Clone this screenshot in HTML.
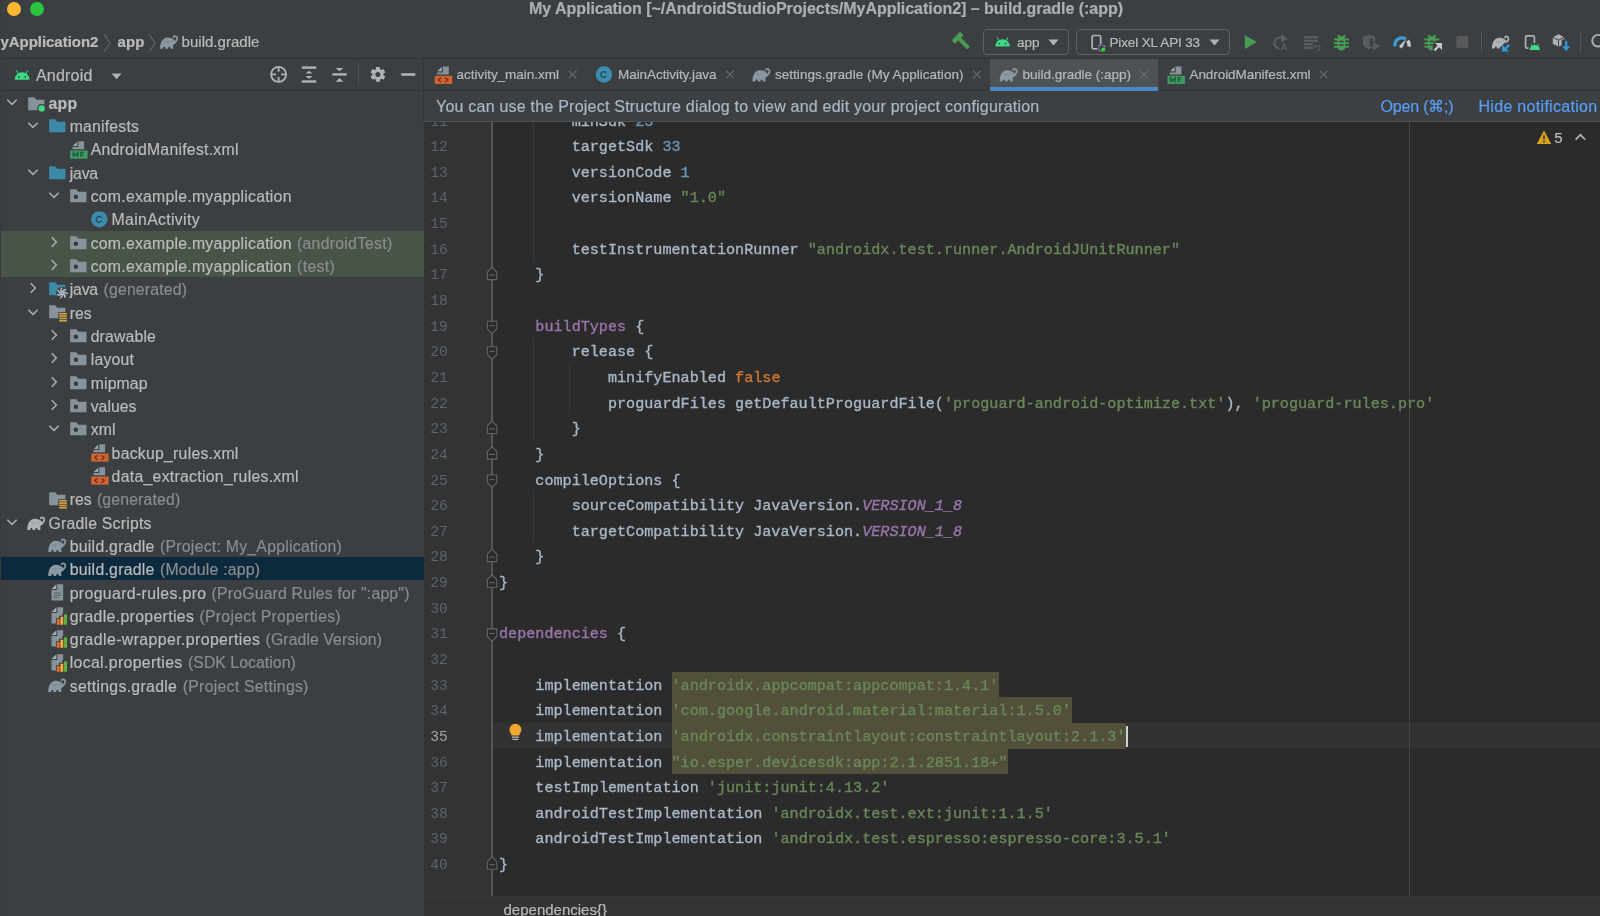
<!DOCTYPE html>
<html><head><meta charset="utf-8"><title>My Application - build.gradle (:app)</title>
<style>

*{margin:0;padding:0;box-sizing:border-box}
html,body{width:1600px;height:916px;overflow:hidden;background:#3c3f41;font-family:"Liberation Sans",sans-serif;}
.t{position:absolute;-webkit-text-stroke:0.2px;white-space:pre;line-height:20px;height:20px;}
.a{position:absolute;}
.m{font-family:"Liberation Mono",monospace;-webkit-text-stroke:0.35px;}
.n{-webkit-text-stroke:0;}
#ed{position:absolute;left:424px;top:122px;width:1176px;height:774px;background:#2b2b2b;overflow:hidden;}
#ed2{position:absolute;left:424px;top:122px;width:1176px;height:774px;overflow:hidden;}
#ed2 .t{margin-left:-424px;margin-top:-122px;}
svg{position:absolute;overflow:visible}
#tx{position:absolute;left:0;top:0;width:1600px;height:916px;will-change:transform;}

</style></head><body>
<div class="a" style="left:0px;top:58px;width:1600px;height:1px;background:#323436;"></div>
<div class="a" style="left:0px;top:90px;width:1600px;height:1px;background:#323436;"></div>
<div class="a" style="left:423.4px;top:59px;width:1px;height:63px;background:#323537;"></div>
<div class="a" style="left:7px;top:2px;width:14px;height:14px;border-radius:7px;background:#fbb930"></div>
<div class="a" style="left:30px;top:2px;width:14px;height:14px;border-radius:7px;background:#2ac43e"></div>
<div class="a" style="left:0px;top:230.71px;width:424px;height:46.64px;background:#495449;"></div>
<div class="a" style="left:0px;top:557.24px;width:424px;height:22.9px;background:#0d293e;"></div>
<div class="a" style="left:990px;top:59px;width:168px;height:31px;background:#4e5254;"></div>
<div class="a" style="left:990px;top:87px;width:168px;height:4px;background:#4a88c7;"></div>
<div class="a" style="left:424.4px;top:91px;width:1176px;height:30px;background:#3d4042;"></div>
<div class="a" style="left:424.4px;top:121px;width:1176px;height:2px;background:#4f5152;"></div>
<div class="a" style="left:983px;top:29px;width:86px;height:26px;border:1px solid #5e6163;border-radius:4px"></div>
<div class="a" style="left:1076px;top:29px;width:154px;height:26px;border:1px solid #5e6163;border-radius:4px"></div>
<div class="a" style="left:1481px;top:31px;width:1px;height:22px;background:#555555;"></div>
<div class="a" style="left:1580px;top:31px;width:1px;height:22px;background:#555555;"></div>
<div class="a" style="left:358.1px;top:63px;width:1px;height:23px;background:#515151;"></div>
<div class="a" style="left:0px;top:0px;width:1px;height:916px;background:#383a3c;"></div>
<div class="a" style="left:424px;top:896.3px;width:1176px;height:20px;background:#313335;"></div>
<div class="a" style="left:424px;top:896.3px;width:1176px;height:1px;background:#37393b;"></div>
<div id="ed">
<div class="a" style="left:0px;top:0px;width:68px;height:774px;background:#313335;"></div>
<div class="a" style="left:67.39999999999998px;top:0px;width:1.4px;height:774px;background:#555555;"></div>
<div class="a" style="left:69px;top:600.9px;width:1107px;height:25px;background:#323232;"></div>
<div class="a" style="left:985px;top:0px;width:1px;height:774px;background:#454545;"></div>
<div class="a" style="left:248.01999999999998px;top:549.62px;width:326.88px;height:25.94px;background:#52503a;"></div>
<div class="a" style="left:248.01999999999998px;top:575.26px;width:399.52px;height:25.94px;background:#52503a;"></div>
<div class="a" style="left:248.01999999999998px;top:600.9px;width:454.0px;height:25.94px;background:#52503a;"></div>
<div class="a" style="left:248.01999999999998px;top:626.54px;width:335.96px;height:25.94px;background:#52503a;"></div>
<div class="a" style="left:702.02px;top:603.72px;width:2px;height:21px;background:#d0d0d0;"></div>
<div class="a" style="left:108.82000000000005px;top:-40.099999999999994px;width:1px;height:179.48000000000002px;background:#393939;"></div>
<div class="a" style="left:108.82000000000005px;top:216.3px;width:1px;height:102.56px;background:#393939;"></div>
<div class="a" style="left:145.14px;top:241.94px;width:1px;height:51.28px;background:#393939;"></div>
<div class="a" style="left:108.82000000000005px;top:370.14000000000004px;width:1px;height:51.28px;background:#393939;"></div>
<svg class="a" style="left:-424px;top:-122px" width="1600" height="916" viewBox="0 0 1600 916"><path d="M487.40000000000003,321.18 H496.8 V328.78000000000003 L492.1,333.58 L487.40000000000003,328.78000000000003 Z" fill="#2b2b2b" stroke="#626568" stroke-width="1.1"/><path d="M489.40000000000003,325.78000000000003 H494.8" stroke="#626568" stroke-width="1.1"/>
<path d="M487.40000000000003,346.82 H496.8 V354.42 L492.1,359.21999999999997 L487.40000000000003,354.42 Z" fill="#2b2b2b" stroke="#626568" stroke-width="1.1"/><path d="M489.40000000000003,351.42 H494.8" stroke="#626568" stroke-width="1.1"/>
<path d="M487.40000000000003,475.02 H496.8 V482.62 L492.1,487.41999999999996 L487.40000000000003,482.62 Z" fill="#2b2b2b" stroke="#626568" stroke-width="1.1"/><path d="M489.40000000000003,479.62 H494.8" stroke="#626568" stroke-width="1.1"/>
<path d="M487.40000000000003,628.8600000000001 H496.8 V636.4600000000002 L492.1,641.2600000000001 L487.40000000000003,636.4600000000002 Z" fill="#2b2b2b" stroke="#626568" stroke-width="1.1"/><path d="M489.40000000000003,633.4600000000002 H494.8" stroke="#626568" stroke-width="1.1"/>
<path d="M492.1,267.2 L496.8,272.0 V279.59999999999997 H487.40000000000003 V272.0 Z" fill="#2b2b2b" stroke="#626568" stroke-width="1.1"/><path d="M489.40000000000003,275.0 H494.8" stroke="#626568" stroke-width="1.1"/>
<path d="M492.1,421.04 L496.8,425.84000000000003 V433.44 H487.40000000000003 V425.84000000000003 Z" fill="#2b2b2b" stroke="#626568" stroke-width="1.1"/><path d="M489.40000000000003,428.84000000000003 H494.8" stroke="#626568" stroke-width="1.1"/>
<path d="M492.1,446.68 L496.8,451.48 V459.08 H487.40000000000003 V451.48 Z" fill="#2b2b2b" stroke="#626568" stroke-width="1.1"/><path d="M489.40000000000003,454.48 H494.8" stroke="#626568" stroke-width="1.1"/>
<path d="M492.1,549.24 L496.8,554.04 V561.64 H487.40000000000003 V554.04 Z" fill="#2b2b2b" stroke="#626568" stroke-width="1.1"/><path d="M489.40000000000003,557.04 H494.8" stroke="#626568" stroke-width="1.1"/>
<path d="M492.1,574.88 L496.8,579.68 V587.28 H487.40000000000003 V579.68 Z" fill="#2b2b2b" stroke="#626568" stroke-width="1.1"/><path d="M489.40000000000003,582.68 H494.8" stroke="#626568" stroke-width="1.1"/>
<path d="M492.1,856.9200000000001 L496.8,861.72 V869.32 H487.40000000000003 V861.72 Z" fill="#2b2b2b" stroke="#626568" stroke-width="1.1"/><path d="M489.40000000000003,864.72 H494.8" stroke="#626568" stroke-width="1.1"/>
<path d="M509.4,729.8 A6,6 0 1 1 521.4,729.8 C521.4,732.4 519.3,733.4 519.3,735.5999999999999 H511.5 C511.5,733.4 509.4,732.4 509.4,729.8 Z" fill="#f0a732"/>
<path d="M511.79999999999995,737.0999999999999 H519.0 M512.4,739.4 H518.4" stroke="#b4b6b8" stroke-width="1.3"/></svg>
</div>
<svg class="a" style="left:26.60px;top:94.60px" width="18.65" height="18.65" viewBox="0 0 16 16"><path d="M1,2 H6.3 L7.9,4 H15 V13 H1 Z" fill="#87939a"/><circle cx="12.6" cy="11.5" r="3.7" fill="#3c3f41"/><circle cx="12.6" cy="11.5" r="2.7" fill="#3ddc84"/></svg>
<svg class="a" style="left:4.200000000000003px;top:93.8px" width="16" height="16" viewBox="-8 -8 16 16"><path d="M-4.7,-2.3 L0,2.4 L4.7,-2.3" fill="none" stroke="#adadad" stroke-width="1.5"/></svg>
<svg class="a" style="left:47.80px;top:117.12px" width="18.65" height="18.65" viewBox="0 0 16 16"><path d="M1,2 H6.3 L7.9,4 H15 V13 H1 Z" fill="#3d8aa8"/></svg>
<svg class="a" style="left:25.400000000000006px;top:117.11999999999999px" width="16" height="16" viewBox="-8 -8 16 16"><path d="M-4.7,-2.3 L0,2.4 L4.7,-2.3" fill="none" stroke="#adadad" stroke-width="1.5"/></svg>
<svg class="a" style="left:68.80px;top:139.74px" width="18.65" height="18.65" viewBox="0 0 16 16"><path d="M7.1,1.3 L3.2,5.2 H7.1 Z" fill="#9ca7ae"/><path d="M8,1 H13 V8 H3 V6.1 H8 Z" fill="#87939a"/><rect x="1" y="9" width="15" height="7" fill="#3d9b63"/><path d="M3.6,14.6 V10.6 L5.6,13.4 L7.6,10.6 V14.6 M10.2,14.6 V10.6 H13 M10.2,12.5 H12.5" fill="none" stroke="#1e5a37" stroke-width="1.05"/></svg>
<svg class="a" style="left:47.80px;top:163.76px" width="18.65" height="18.65" viewBox="0 0 16 16"><path d="M1,2 H6.3 L7.9,4 H15 V13 H1 Z" fill="#3d8aa8"/></svg>
<svg class="a" style="left:25.400000000000006px;top:163.76000000000002px" width="16" height="16" viewBox="-8 -8 16 16"><path d="M-4.7,-2.3 L0,2.4 L4.7,-2.3" fill="none" stroke="#adadad" stroke-width="1.5"/></svg>
<svg class="a" style="left:68.80px;top:187.08px" width="18.65" height="18.65" viewBox="0 0 16 16"><path d="M1,2 H6.3 L7.9,4 H15 V13 H1 Z" fill="#87939a"/><circle cx="5.9" cy="8.4" r="1.9" fill="#34383b"/></svg>
<svg class="a" style="left:46.400000000000006px;top:187.08px" width="16" height="16" viewBox="-8 -8 16 16"><path d="M-4.7,-2.3 L0,2.4 L4.7,-2.3" fill="none" stroke="#adadad" stroke-width="1.5"/></svg>
<svg class="a" style="left:89.70px;top:209.70px" width="18.65" height="18.65" viewBox="0 0 16 16"><circle cx="8" cy="8" r="7" fill="#3c8dab"/><path d="M9.95,9.4 A2.5,2.5 0 1 1 9.95,6.6" fill="none" stroke="#27485a" stroke-width="1.15"/></svg>
<svg class="a" style="left:68.80px;top:233.72px" width="18.65" height="18.65" viewBox="0 0 16 16"><path d="M1,2 H6.3 L7.9,4 H15 V13 H1 Z" fill="#87939a"/><circle cx="5.9" cy="8.4" r="1.9" fill="#34383b"/></svg>
<svg class="a" style="left:45.60000000000001px;top:233.82000000000002px" width="16" height="16" viewBox="-8 -8 16 16"><path d="M-2.3,-4.7 L2.4,0 L-2.3,4.7" fill="none" stroke="#adadad" stroke-width="1.5"/></svg>
<svg class="a" style="left:68.80px;top:257.04px" width="18.65" height="18.65" viewBox="0 0 16 16"><path d="M1,2 H6.3 L7.9,4 H15 V13 H1 Z" fill="#87939a"/><circle cx="5.9" cy="8.4" r="1.9" fill="#34383b"/></svg>
<svg class="a" style="left:45.60000000000001px;top:257.14px" width="16" height="16" viewBox="-8 -8 16 16"><path d="M-2.3,-4.7 L2.4,0 L-2.3,4.7" fill="none" stroke="#adadad" stroke-width="1.5"/></svg>
<svg class="a" style="left:47.80px;top:280.06px" width="18.65" height="18.65" viewBox="0 0 16 16"><path d="M1,2 H6.3 L7.9,4 H15 V13 H1 Z" fill="#3d8aa8"/><circle cx="12.2" cy="11.2" r="5.3" fill="#3c3f41"/><path d="M13.30,11.20 Q14.54,12.48 14.52,14.82 M12.89,12.06 Q12.66,13.83 10.82,15.27 M11.96,12.27 Q10.43,13.20 8.16,12.66 M11.21,11.68 Q9.54,11.06 8.54,8.95 M11.21,10.72 Q10.65,9.03 11.68,6.93 M11.96,10.13 Q12.93,8.63 15.21,8.13 M12.89,10.34 Q14.66,10.17 16.48,11.64" fill="none" stroke="#b5c3cd" stroke-width="1.25" stroke-linecap="round"/></svg>
<svg class="a" style="left:24.60000000000001px;top:280.46px" width="16" height="16" viewBox="-8 -8 16 16"><path d="M-2.3,-4.7 L2.4,0 L-2.3,4.7" fill="none" stroke="#adadad" stroke-width="1.5"/></svg>
<svg class="a" style="left:47.80px;top:303.08px" width="18.65" height="18.65" viewBox="0 0 16 16"><path d="M1,2 H6.3 L7.9,4 H15 V13 H1 Z" fill="#87939a"/><rect x="8.9" y="7.9" width="7.6" height="8.9" fill="#3c3f41"/><rect x="9.6" y="8.6" width="6.6" height="1.35" fill="#d9a343"/><rect x="9.6" y="10.6" width="6.6" height="1.35" fill="#d9a343"/><rect x="9.6" y="12.6" width="6.6" height="1.35" fill="#d9a343"/><rect x="9.6" y="14.6" width="6.6" height="1.35" fill="#d9a343"/></svg>
<svg class="a" style="left:25.400000000000006px;top:303.68px" width="16" height="16" viewBox="-8 -8 16 16"><path d="M-4.7,-2.3 L0,2.4 L4.7,-2.3" fill="none" stroke="#adadad" stroke-width="1.5"/></svg>
<svg class="a" style="left:68.80px;top:327.00px" width="18.65" height="18.65" viewBox="0 0 16 16"><path d="M1,2 H6.3 L7.9,4 H15 V13 H1 Z" fill="#87939a"/><circle cx="5.9" cy="8.4" r="1.9" fill="#34383b"/></svg>
<svg class="a" style="left:45.60000000000001px;top:327.09999999999997px" width="16" height="16" viewBox="-8 -8 16 16"><path d="M-2.3,-4.7 L2.4,0 L-2.3,4.7" fill="none" stroke="#adadad" stroke-width="1.5"/></svg>
<svg class="a" style="left:68.80px;top:350.32px" width="18.65" height="18.65" viewBox="0 0 16 16"><path d="M1,2 H6.3 L7.9,4 H15 V13 H1 Z" fill="#87939a"/><circle cx="5.9" cy="8.4" r="1.9" fill="#34383b"/></svg>
<svg class="a" style="left:45.60000000000001px;top:350.41999999999996px" width="16" height="16" viewBox="-8 -8 16 16"><path d="M-2.3,-4.7 L2.4,0 L-2.3,4.7" fill="none" stroke="#adadad" stroke-width="1.5"/></svg>
<svg class="a" style="left:68.80px;top:373.64px" width="18.65" height="18.65" viewBox="0 0 16 16"><path d="M1,2 H6.3 L7.9,4 H15 V13 H1 Z" fill="#87939a"/><circle cx="5.9" cy="8.4" r="1.9" fill="#34383b"/></svg>
<svg class="a" style="left:45.60000000000001px;top:373.74px" width="16" height="16" viewBox="-8 -8 16 16"><path d="M-2.3,-4.7 L2.4,0 L-2.3,4.7" fill="none" stroke="#adadad" stroke-width="1.5"/></svg>
<svg class="a" style="left:68.80px;top:396.96px" width="18.65" height="18.65" viewBox="0 0 16 16"><path d="M1,2 H6.3 L7.9,4 H15 V13 H1 Z" fill="#87939a"/><circle cx="5.9" cy="8.4" r="1.9" fill="#34383b"/></svg>
<svg class="a" style="left:45.60000000000001px;top:397.06px" width="16" height="16" viewBox="-8 -8 16 16"><path d="M-2.3,-4.7 L2.4,0 L-2.3,4.7" fill="none" stroke="#adadad" stroke-width="1.5"/></svg>
<svg class="a" style="left:68.80px;top:420.28px" width="18.65" height="18.65" viewBox="0 0 16 16"><path d="M1,2 H6.3 L7.9,4 H15 V13 H1 Z" fill="#87939a"/><circle cx="5.9" cy="8.4" r="1.9" fill="#34383b"/></svg>
<svg class="a" style="left:46.400000000000006px;top:420.28000000000003px" width="16" height="16" viewBox="-8 -8 16 16"><path d="M-4.7,-2.3 L0,2.4 L4.7,-2.3" fill="none" stroke="#adadad" stroke-width="1.5"/></svg>
<svg class="a" style="left:89.70px;top:442.90px" width="18.65" height="18.65" viewBox="0 0 16 16"><path d="M7.1,1.3 L3.2,5.2 H7.1 Z" fill="#9ca7ae"/><path d="M8,1 H13 V8 H3 V6.1 H8 Z" fill="#87939a"/><rect x="1" y="9" width="15" height="7" fill="#cd6330"/><path d="M6.4,10.6 L4.1,12.5 L6.4,14.4 M9.9,10.6 L12.2,12.5 L9.9,14.4" fill="none" stroke="#632c12" stroke-width="0.95"/></svg>
<svg class="a" style="left:89.70px;top:466.22px" width="18.65" height="18.65" viewBox="0 0 16 16"><path d="M7.1,1.3 L3.2,5.2 H7.1 Z" fill="#9ca7ae"/><path d="M8,1 H13 V8 H3 V6.1 H8 Z" fill="#87939a"/><rect x="1" y="9" width="15" height="7" fill="#cd6330"/><path d="M6.4,10.6 L4.1,12.5 L6.4,14.4 M9.9,10.6 L12.2,12.5 L9.9,14.4" fill="none" stroke="#632c12" stroke-width="0.95"/></svg>
<svg class="a" style="left:47.80px;top:489.64px" width="18.65" height="18.65" viewBox="0 0 16 16"><path d="M1,2 H6.3 L7.9,4 H15 V13 H1 Z" fill="#87939a"/><rect x="8.9" y="7.9" width="7.6" height="8.9" fill="#3c3f41"/><rect x="9.6" y="8.6" width="6.6" height="1.35" fill="#d9a343"/><rect x="9.6" y="10.6" width="6.6" height="1.35" fill="#d9a343"/><rect x="9.6" y="12.6" width="6.6" height="1.35" fill="#d9a343"/><rect x="9.6" y="14.6" width="6.6" height="1.35" fill="#d9a343"/></svg>
<svg class="a" style="left:26.60px;top:513.86px" width="18.65" height="18.65" viewBox="0 0 16 16"><path d="M0.2,13.65 C0.2,10.5 0.9,8.3 1.7,7.1 C2.7,5.4 4.4,4.05 6.9,4.05 C9.2,4.05 10.9,4.9 12.0,5.9 L13.6,7.2 L13.1,9.3 C12.0,10 11.35,10.4 11.35,10.9 L11.57,13.65 L9.33,13.65 C9.2,12.4 8.6,12.05 8.09,12.05 C7.6,12.05 7.1,12.4 7.08,13.65 L4.83,13.65 C4.8,12.4 4.2,12.05 3.7,12.05 C3.2,12.05 2.7,12.4 2.69,13.65 Z" fill="#afb1b3"/><path d="M12.3,8.7 C13.5,8.1 14.4,7.1 14.75,5.5 C15.1,4.1 14.4,3.0 13.1,2.9 C12.3,2.85 11.8,3.25 11.85,3.8" fill="none" stroke="#afb1b3" stroke-width="1.55" stroke-linecap="round"/><path d="M3.7,7.1 C4.3,8.3 6.6,8.5 7.5,7.1" fill="none" stroke="#84878a" stroke-width="0.6"/><circle cx="10.45" cy="7.1" r="0.5" fill="#84878a"/></svg>
<svg class="a" style="left:4.200000000000003px;top:513.56px" width="16" height="16" viewBox="-8 -8 16 16"><path d="M-4.7,-2.3 L0,2.4 L4.7,-2.3" fill="none" stroke="#adadad" stroke-width="1.5"/></svg>
<svg class="a" style="left:47.80px;top:536.18px" width="18.65" height="18.65" viewBox="0 0 16 16"><path d="M0.2,13.65 C0.2,10.5 0.9,8.3 1.7,7.1 C2.7,5.4 4.4,4.05 6.9,4.05 C9.2,4.05 10.9,4.9 12.0,5.9 L13.6,7.2 L13.1,9.3 C12.0,10 11.35,10.4 11.35,10.9 L11.57,13.65 L9.33,13.65 C9.2,12.4 8.6,12.05 8.09,12.05 C7.6,12.05 7.1,12.4 7.08,13.65 L4.83,13.65 C4.8,12.4 4.2,12.05 3.7,12.05 C3.2,12.05 2.7,12.4 2.69,13.65 Z" fill="#8a98a2"/><path d="M12.3,8.7 C13.5,8.1 14.4,7.1 14.75,5.5 C15.1,4.1 14.4,3.0 13.1,2.9 C12.3,2.85 11.8,3.25 11.85,3.8" fill="none" stroke="#8a98a2" stroke-width="1.55" stroke-linecap="round"/><path d="M3.7,7.1 C4.3,8.3 6.6,8.5 7.5,7.1" fill="none" stroke="#66737c" stroke-width="0.6"/><circle cx="10.45" cy="7.1" r="0.5" fill="#66737c"/></svg>
<svg class="a" style="left:47.80px;top:559.50px" width="18.65" height="18.65" viewBox="0 0 16 16"><path d="M0.2,13.65 C0.2,10.5 0.9,8.3 1.7,7.1 C2.7,5.4 4.4,4.05 6.9,4.05 C9.2,4.05 10.9,4.9 12.0,5.9 L13.6,7.2 L13.1,9.3 C12.0,10 11.35,10.4 11.35,10.9 L11.57,13.65 L9.33,13.65 C9.2,12.4 8.6,12.05 8.09,12.05 C7.6,12.05 7.1,12.4 7.08,13.65 L4.83,13.65 C4.8,12.4 4.2,12.05 3.7,12.05 C3.2,12.05 2.7,12.4 2.69,13.65 Z" fill="#8a98a2"/><path d="M12.3,8.7 C13.5,8.1 14.4,7.1 14.75,5.5 C15.1,4.1 14.4,3.0 13.1,2.9 C12.3,2.85 11.8,3.25 11.85,3.8" fill="none" stroke="#8a98a2" stroke-width="1.55" stroke-linecap="round"/><path d="M3.7,7.1 C4.3,8.3 6.6,8.5 7.5,7.1" fill="none" stroke="#66737c" stroke-width="0.6"/><circle cx="10.45" cy="7.1" r="0.5" fill="#66737c"/></svg>
<svg class="a" style="left:47.80px;top:582.82px" width="18.65" height="18.65" viewBox="0 0 16 16"><path d="M7.2,1 L3,5.2 H7.2 Z" fill="#a3adb3"/><path d="M8,1 H13 V15 H3 V6 H8 Z" fill="#87939a"/><path d="M5,8.5 H11 M5,10.5 H11 M5,12.5 H9" stroke="#5a6369" stroke-width="0.9"/></svg>
<svg class="a" style="left:47.80px;top:606.14px" width="18.65" height="18.65" viewBox="0 0 16 16"><path d="M7.2,1 L3,5.2 H7.2 Z" fill="#a3adb3"/><path d="M8,1 H13 V15 H3 V6 H8 Z" fill="#87939a"/><path d="M6.9,16.6 V10.5 H9.5 V8.3 H12.2 V6.3 H16.8 V16.6 Z" fill="#3c3f41"/><rect x="7.6" y="11.3" width="2.4" height="4.8" fill="#f26c21"/><rect x="10.7" y="9.2" width="2.4" height="6.9" fill="#f4b43e"/><rect x="13.8" y="7.2" width="2.5" height="8.9" fill="#62b543"/></svg>
<svg class="a" style="left:47.80px;top:629.46px" width="18.65" height="18.65" viewBox="0 0 16 16"><path d="M7.2,1 L3,5.2 H7.2 Z" fill="#a3adb3"/><path d="M8,1 H13 V15 H3 V6 H8 Z" fill="#87939a"/><path d="M6.9,16.6 V10.5 H9.5 V8.3 H12.2 V6.3 H16.8 V16.6 Z" fill="#3c3f41"/><rect x="7.6" y="11.3" width="2.4" height="4.8" fill="#f26c21"/><rect x="10.7" y="9.2" width="2.4" height="6.9" fill="#f4b43e"/><rect x="13.8" y="7.2" width="2.5" height="8.9" fill="#62b543"/></svg>
<svg class="a" style="left:47.80px;top:652.78px" width="18.65" height="18.65" viewBox="0 0 16 16"><path d="M7.2,1 L3,5.2 H7.2 Z" fill="#a3adb3"/><path d="M8,1 H13 V15 H3 V6 H8 Z" fill="#87939a"/><path d="M6.9,16.6 V10.5 H9.5 V8.3 H12.2 V6.3 H16.8 V16.6 Z" fill="#3c3f41"/><rect x="7.6" y="11.3" width="2.4" height="4.8" fill="#f26c21"/><rect x="10.7" y="9.2" width="2.4" height="6.9" fill="#f4b43e"/><rect x="13.8" y="7.2" width="2.5" height="8.9" fill="#62b543"/></svg>
<svg class="a" style="left:47.80px;top:676.10px" width="18.65" height="18.65" viewBox="0 0 16 16"><path d="M0.2,13.65 C0.2,10.5 0.9,8.3 1.7,7.1 C2.7,5.4 4.4,4.05 6.9,4.05 C9.2,4.05 10.9,4.9 12.0,5.9 L13.6,7.2 L13.1,9.3 C12.0,10 11.35,10.4 11.35,10.9 L11.57,13.65 L9.33,13.65 C9.2,12.4 8.6,12.05 8.09,12.05 C7.6,12.05 7.1,12.4 7.08,13.65 L4.83,13.65 C4.8,12.4 4.2,12.05 3.7,12.05 C3.2,12.05 2.7,12.4 2.69,13.65 Z" fill="#8a98a2"/><path d="M12.3,8.7 C13.5,8.1 14.4,7.1 14.75,5.5 C15.1,4.1 14.4,3.0 13.1,2.9 C12.3,2.85 11.8,3.25 11.85,3.8" fill="none" stroke="#8a98a2" stroke-width="1.55" stroke-linecap="round"/><path d="M3.7,7.1 C4.3,8.3 6.6,8.5 7.5,7.1" fill="none" stroke="#66737c" stroke-width="0.6"/><circle cx="10.45" cy="7.1" r="0.5" fill="#66737c"/></svg>
<svg class="a" style="left:0;top:0" width="1600" height="916" viewBox="0 0 1600 916"><path d="M104.3,34.5 L109.89999999999999,43 L104.3,51.5" fill="none" stroke="#5f6668" stroke-width="1.2"/>
<path d="M149.3,34.5 L154.9,43 L149.3,51.5" fill="none" stroke="#5f6668" stroke-width="1.2"/>
<g transform="translate(159.80,32.80) scale(1.1655)"><path d="M0.2,13.65 C0.2,10.5 0.9,8.3 1.7,7.1 C2.7,5.4 4.4,4.05 6.9,4.05 C9.2,4.05 10.9,4.9 12.0,5.9 L13.6,7.2 L13.1,9.3 C12.0,10 11.35,10.4 11.35,10.9 L11.57,13.65 L9.33,13.65 C9.2,12.4 8.6,12.05 8.09,12.05 C7.6,12.05 7.1,12.4 7.08,13.65 L4.83,13.65 C4.8,12.4 4.2,12.05 3.7,12.05 C3.2,12.05 2.7,12.4 2.69,13.65 Z" fill="#8a98a2"/><path d="M12.3,8.7 C13.5,8.1 14.4,7.1 14.75,5.5 C15.1,4.1 14.4,3.0 13.1,2.9 C12.3,2.85 11.8,3.25 11.85,3.8" fill="none" stroke="#8a98a2" stroke-width="1.55" stroke-linecap="round"/><path d="M3.7,7.1 C4.3,8.3 6.6,8.5 7.5,7.1" fill="none" stroke="#66737c" stroke-width="0.6"/><circle cx="10.45" cy="7.1" r="0.5" fill="#66737c"/></g>
<g transform="translate(12.80,65.10) scale(1.1655)"><path d="M1.6,12.6 A6.4,6.4 0 0 1 14.4,12.6 Z" fill="#3ddc84"/><path d="M4.9,7.6 L3.3,4.9 M11.1,7.6 L12.7,4.9" stroke="#3ddc84" stroke-width="0.9" stroke-linecap="round"/><circle cx="5.2" cy="10.1" r="0.8" fill="#3c3f41"/><circle cx="10.8" cy="10.1" r="0.8" fill="#3c3f41"/></g>
<path d="M111.6,73.6 H121.6 L116.6,79.3 Z" fill="#afb1b3"/>
<circle cx="278.6" cy="74.4" r="7.5" fill="none" stroke="#afb1b3" stroke-width="1.9"/>
<path d="M271.0,74.4 H276.0 M281.20000000000005,74.4 H286.20000000000005 M278.6,66.80000000000001 V71.80000000000001 M278.6,77.0 V82.0" stroke="#afb1b3" stroke-width="1.9"/>
<rect x="301.8" y="66.4" width="14.4" height="2.4" fill="#afb1b3"/><rect x="301.8" y="80.3" width="14.4" height="2.4" fill="#afb1b3"/>
<path d="M305.4,73.5 L309,70.7 L312.6,73.5 Z M305.4,76 L309,78.9 L312.6,76 Z" fill="#afb1b3"/>
<rect x="332.3" y="73.2" width="14.4" height="2.4" fill="#afb1b3"/>
<path d="M335.6,68 H343.4 L339.5,71.3 Z M335.6,81.8 H343.4 L339.5,78 Z" fill="#afb1b3"/>
<path d="M375.93,69.16 L375.92,66.96 L379.88,66.96 L379.87,69.16 L381.45,70.07 L383.35,68.97 L385.33,72.39 L383.43,73.49 L383.43,75.31 L385.33,76.41 L383.35,79.83 L381.45,78.73 L379.87,79.64 L379.88,81.84 L375.92,81.84 L375.93,79.64 L374.35,78.73 L372.45,79.83 L370.47,76.41 L372.37,75.31 L372.37,73.49 L370.47,72.39 L372.45,68.97 L374.35,70.07 Z M380.4,74.4 A2.5,2.5 0 1 0 375.4,74.4 A2.5,2.5 0 1 0 380.4,74.4 Z" fill="#afb1b3" fill-rule="evenodd"/>
<rect x="401.2" y="73.2" width="14.1" height="2.6" fill="#afb1b3"/>
<g transform="translate(957.4,37.9) rotate(-45)" fill="#479d56"><path d="M-5.2,2.5 L-6.4,-0.4 L-4.6,-2.5 H6.3 V2.5 Z"/><rect x="-1.2" y="2" width="3.8" height="13" rx="0.5"/></g>
<g transform="translate(993.60,32.30) scale(1.12)"><path d="M1.6,12.6 A6.4,6.4 0 0 1 14.4,12.6 Z" fill="#3ddc84"/><path d="M4.9,7.6 L3.3,4.9 M11.1,7.6 L12.7,4.9" stroke="#3ddc84" stroke-width="0.9" stroke-linecap="round"/><circle cx="5.2" cy="10.1" r="0.8" fill="#3c3f41"/><circle cx="10.8" cy="10.1" r="0.8" fill="#3c3f41"/></g>
<path d="M1048.4,39.6 H1058.6 L1053.5,45.4 Z" fill="#afb1b3"/>
<path d="M1209.4,39.6 H1219.6 L1214.5,45.4 Z" fill="#afb1b3"/>
<rect x="1092.1" y="35.5" width="8.6" height="13.4" rx="1.6" fill="none" stroke="#a9b3bb" stroke-width="1.7"/>
<rect x="1097.4" y="44.2" width="8.6" height="8.2" fill="#3c3f41"/>
<rect x="1098.8" y="45.2" width="5.8" height="5.6" fill="none" stroke="#9f79c4" stroke-width="1.1" stroke-dasharray="2.2 0.7"/>
<circle cx="1103.2" cy="49.5" r="1.9" fill="#1fe02a"/>
<path d="M1244.9,35.2 L1257,42.1 L1244.9,49 Z" fill="#499c54"/>
<path d="M1283.4,38.6 A5.6,5.6 0 1 0 1279.6,48.6" fill="none" stroke="#5c5f61" stroke-width="1.9"/>
<path d="M1281.2,34.2 L1287.6,38.4 L1281.2,42.6 Z" fill="#5c5f61"/>
<path d="M1281.4,50.2 L1284.1,43.6 L1286.8,50.2 M1282.4,48.2 H1285.8" fill="none" stroke="#5c5f61" stroke-width="1.3"/>
<path d="M1303.8,37.2 H1318 M1303.8,40.7 H1318 M1303.8,44.2 H1312.8 M1303.8,47.7 H1312.8" stroke="#5c5f61" stroke-width="2"/>
<path d="M1314.2,46.2 H1318.4 A1.9,1.9 0 0 1 1318.4,50 H1316.6" fill="none" stroke="#5c5f61" stroke-width="1.1"/><path d="M1315.8,44.2 L1313.4,46.2 L1315.8,48.2 Z" fill="#5c5f61"/>
<g><path d="M1337.7,35.1 L1340.2,37.8 M1345.1000000000001,35.1 L1342.6000000000001,37.8" stroke="#499c54" stroke-width="1.9"/><path d="M1337.4,40.2 A4,4 0 0 1 1345.4,40.2 V46.5 A4,4 0 0 1 1337.4,46.5 Z" fill="#499c54"/><rect x="1333.9" y="38.449999999999996" width="15" height="1.9" fill="#499c54"/><rect x="1333.9" y="42.25" width="15" height="1.9" fill="#499c54"/><rect x="1333.9" y="45.8" width="15" height="1.9" fill="#499c54"/><rect x="1339.0" y="40.75" width="4.8" height="1.35" fill="#3c3f41"/><rect x="1339.0" y="44.3" width="4.8" height="1.35" fill="#3c3f41"/></g>
<path d="M1362.9,36.4 L1368.9,35.1 L1375,36.4 V42.4 C1375,45.8 1372.4,48.2 1368.9,49.2 C1365.4,48.2 1362.9,45.8 1362.9,42.4 Z" fill="#595b5c"/>
<path d="M1369.6,38.2 H1372.7 V44.2 C1372.5,45.4 1371.4,46.4 1369.6,47 Z" fill="#3c3f41"/>
<path d="M1371.7,40.2 L1382.3,46.3 L1371.7,52.4 Z" fill="#3c3f41"/><path d="M1372.9,42 L1380.5,46.3 L1372.9,50.8 Z" fill="#595b5c"/>
<path d="M1395.2,46.4 A7,7 0 0 1 1405.8,38.9" fill="none" stroke="#3a9bd5" stroke-width="3.4"/>
<path d="M1407.6,40.6 A7,7 0 0 1 1408.9,46.6" fill="none" stroke="#c8c9ca" stroke-width="3.4"/>
<path d="M1399.5,45.4 L1406.9,37.9 L1403,47.3 A1.9,1.9 0 0 1 1399.5,45.4 Z" fill="#c8c9ca" stroke="#3c3f41" stroke-width="0.5"/>
<clipPath id="cpb"><path d="M1420,30 H1445 V41.6 H1435.2 L1432.6,44.2 V55 H1420 Z"/></clipPath>
<g clip-path="url(#cpb)"><path d="M1428.2,35.1 L1430.7,37.8 M1435.6000000000001,35.1 L1433.1000000000001,37.8" stroke="#499c54" stroke-width="1.9"/><path d="M1427.9,40.2 A4,4 0 0 1 1435.9,40.2 V46.5 A4,4 0 0 1 1427.9,46.5 Z" fill="#499c54"/><rect x="1424.4" y="38.449999999999996" width="15" height="1.9" fill="#499c54"/><rect x="1424.4" y="42.25" width="15" height="1.9" fill="#499c54"/><rect x="1424.4" y="45.8" width="15" height="1.9" fill="#499c54"/><rect x="1429.5" y="40.75" width="4.8" height="1.35" fill="#3c3f41"/><rect x="1429.5" y="44.3" width="4.8" height="1.35" fill="#3c3f41"/></g>
<path d="M1434.4,50.4 L1439.6,45.2" stroke="#c6c7c8" stroke-width="2.3"/><path d="M1435,43 H1442 V50 Z" fill="#c6c7c8"/>
<rect x="1456.4" y="36.2" width="11.8" height="11.6" fill="#5a5a5a"/>
<clipPath id="cpg"><path d="M1488,30 H1512 V42.6 H1505 L1500,47.6 V52 H1488 Z"/></clipPath>
<g clip-path="url(#cpg)"><g transform="translate(1491.7,33.2) scale(1.13)"><path d="M0.2,13.65 C0.2,10.5 0.9,8.3 1.7,7.1 C2.7,5.4 4.4,4.05 6.9,4.05 C9.2,4.05 10.9,4.9 12.0,5.9 L13.6,7.2 L13.1,9.3 C12.0,10 11.35,10.4 11.35,10.9 L11.57,13.65 L9.33,13.65 C9.2,12.4 8.6,12.05 8.09,12.05 C7.6,12.05 7.1,12.4 7.08,13.65 L4.83,13.65 C4.8,12.4 4.2,12.05 3.7,12.05 C3.2,12.05 2.7,12.4 2.69,13.65 Z" fill="#afb1b3"/><path d="M12.3,8.7 C13.5,8.1 14.4,7.1 14.75,5.5 C15.1,4.1 14.4,3.0 13.1,2.9 C12.3,2.85 11.8,3.25 11.85,3.8" fill="none" stroke="#afb1b3" stroke-width="1.55" stroke-linecap="round"/><path d="M3.7,7.1 C4.3,8.3 6.6,8.5 7.5,7.1" fill="none" stroke="#84878a" stroke-width="0.6"/><circle cx="10.45" cy="7.1" r="0.5" fill="#84878a"/></g></g>
<path d="M1509.4,44.6 L1503.6,50.4" stroke="#2f9bd8" stroke-width="2.2"/><path d="M1502,44.6 V51.6 H1509 Z" fill="#2f9bd8"/>
<rect x="1525.6" y="35.8" width="8.8" height="12.4" rx="1.5" fill="none" stroke="#afb1b3" stroke-width="1.7"/>
<rect x="1528.6" y="43" width="12.5" height="8" fill="#3c3f41"/>
<path d="M1529.8,50 A5.05,5.4 0 0 1 1539.9,50 Z" fill="#3ddc84"/><path d="M1532.2,45.8 L1531,43.8 M1537.5,45.8 L1538.7,43.8" stroke="#3ddc84" stroke-width="0.9"/>
<path d="M1558.5,34.3 L1564.2,37.2 V43.8 L1558.5,46.8 L1552.8,43.8 V37.2 Z" fill="#afb1b3"/>
<path d="M1552.8,37.2 L1558.5,40.2 L1564.2,37.2 M1558.5,40.2 V46.8" fill="none" stroke="#3c3f41" stroke-width="1"/>
<rect x="1561.6" y="39.6" width="9.4" height="12" fill="#3c3f41"/>
<path d="M1566.2,40.8 V48.6" stroke="#2f9bd8" stroke-width="2.1"/><path d="M1562.2,46.3 H1570.2 L1566.2,51 Z" fill="#2f9bd8"/>
<circle cx="1598" cy="40.7" r="5.8" fill="none" stroke="#afb1b3" stroke-width="1.9"/>
<g transform="translate(433.60,65.30) scale(1.1655)"><path d="M7.1,1.3 L3.2,5.2 H7.1 Z" fill="#9ca7ae"/><path d="M8,1 H13 V8 H3 V6.1 H8 Z" fill="#87939a"/><rect x="1" y="9" width="15" height="7" fill="#cd6330"/><path d="M6.4,10.6 L4.1,12.5 L6.4,14.4 M9.9,10.6 L12.2,12.5 L9.9,14.4" fill="none" stroke="#632c12" stroke-width="0.95"/></g>
<path d="M568.7,70.6 L576.5,78.4 M576.5,70.6 L568.7,78.4" stroke="#6c6e70" stroke-width="1.1"/>
<g transform="translate(594.60,65.20) scale(1.1655)"><circle cx="8" cy="8" r="7" fill="#3c8dab"/><path d="M9.95,9.4 A2.5,2.5 0 1 1 9.95,6.6" fill="none" stroke="#27485a" stroke-width="1.15"/></g>
<path d="M726.1,70.6 L733.9,78.4 M733.9,70.6 L726.1,78.4" stroke="#6c6e70" stroke-width="1.1"/>
<g transform="translate(752.20,65.50) scale(1.1655)"><path d="M0.2,13.65 C0.2,10.5 0.9,8.3 1.7,7.1 C2.7,5.4 4.4,4.05 6.9,4.05 C9.2,4.05 10.9,4.9 12.0,5.9 L13.6,7.2 L13.1,9.3 C12.0,10 11.35,10.4 11.35,10.9 L11.57,13.65 L9.33,13.65 C9.2,12.4 8.6,12.05 8.09,12.05 C7.6,12.05 7.1,12.4 7.08,13.65 L4.83,13.65 C4.8,12.4 4.2,12.05 3.7,12.05 C3.2,12.05 2.7,12.4 2.69,13.65 Z" fill="#8a98a2"/><path d="M12.3,8.7 C13.5,8.1 14.4,7.1 14.75,5.5 C15.1,4.1 14.4,3.0 13.1,2.9 C12.3,2.85 11.8,3.25 11.85,3.8" fill="none" stroke="#8a98a2" stroke-width="1.55" stroke-linecap="round"/><path d="M3.7,7.1 C4.3,8.3 6.6,8.5 7.5,7.1" fill="none" stroke="#66737c" stroke-width="0.6"/><circle cx="10.45" cy="7.1" r="0.5" fill="#66737c"/></g>
<path d="M973.1,70.6 L980.9,78.4 M980.9,70.6 L973.1,78.4" stroke="#6c6e70" stroke-width="1.1"/>
<g transform="translate(999.40,65.50) scale(1.1655)"><path d="M0.2,13.65 C0.2,10.5 0.9,8.3 1.7,7.1 C2.7,5.4 4.4,4.05 6.9,4.05 C9.2,4.05 10.9,4.9 12.0,5.9 L13.6,7.2 L13.1,9.3 C12.0,10 11.35,10.4 11.35,10.9 L11.57,13.65 L9.33,13.65 C9.2,12.4 8.6,12.05 8.09,12.05 C7.6,12.05 7.1,12.4 7.08,13.65 L4.83,13.65 C4.8,12.4 4.2,12.05 3.7,12.05 C3.2,12.05 2.7,12.4 2.69,13.65 Z" fill="#8a98a2"/><path d="M12.3,8.7 C13.5,8.1 14.4,7.1 14.75,5.5 C15.1,4.1 14.4,3.0 13.1,2.9 C12.3,2.85 11.8,3.25 11.85,3.8" fill="none" stroke="#8a98a2" stroke-width="1.55" stroke-linecap="round"/><path d="M3.7,7.1 C4.3,8.3 6.6,8.5 7.5,7.1" fill="none" stroke="#66737c" stroke-width="0.6"/><circle cx="10.45" cy="7.1" r="0.5" fill="#66737c"/></g>
<path d="M1140.1,70.6 L1147.9,78.4 M1147.9,70.6 L1140.1,78.4" stroke="#6c6e70" stroke-width="1.1"/>
<g transform="translate(1166.30,65.30) scale(1.1655)"><path d="M7.1,1.3 L3.2,5.2 H7.1 Z" fill="#9ca7ae"/><path d="M8,1 H13 V8 H3 V6.1 H8 Z" fill="#87939a"/><rect x="1" y="9" width="15" height="7" fill="#3d9b63"/><path d="M3.6,14.6 V10.6 L5.6,13.4 L7.6,10.6 V14.6 M10.2,14.6 V10.6 H13 M10.2,12.5 H12.5" fill="none" stroke="#1e5a37" stroke-width="1.05"/></g>
<path d="M1319.6,70.6 L1327.4,78.4 M1327.4,70.6 L1319.6,78.4" stroke="#6c6e70" stroke-width="1.1"/>
<path d="M1544,130.6 L1551.3,144 H1536.7 Z" fill="#d6a520"/><path d="M1544,135.2 V139.6 M1544,140.8 V142.6" stroke="#2b2b2b" stroke-width="1.5"/>
<path d="M1575.6,139.6 L1580.4,134.8 L1585.2,139.6" fill="none" stroke="#b0b0b0" stroke-width="1.7"/></svg>
<div id="tx">
<span class="t" style="left:529px;top:-1.00px;font-size:16px;color:#adafb1;font-weight:bold;letter-spacing:-0.030px;">My Application [~/AndroidStudioProjects/MyApplication2] – build.gradle (:app)</span>
<span class="t" style="left:0.4px;top:32.00px;font-size:15px;color:#bbbbbb;font-weight:bold;letter-spacing:-0.028px;">yApplication2</span>
<span class="t" style="left:117.5px;top:32.00px;font-size:15px;color:#bbbbbb;font-weight:bold;letter-spacing:0.109px;">app</span>
<span class="t" style="left:181.5px;top:32.00px;font-size:15px;color:#bbbbbb;letter-spacing:0.036px;">build.gradle</span>
<span class="t" style="left:36px;top:66.00px;font-size:16px;color:#bbbbbb;letter-spacing:0.192px;">Android</span>
<span class="t" style="left:1017px;top:32.50px;font-size:13.5px;color:#bbbbbb;letter-spacing:-0.010px;">app</span>
<span class="t" style="left:1109.5px;top:32.50px;font-size:13.5px;color:#bbbbbb;letter-spacing:-0.138px;">Pixel XL API 33</span>
<span class="t" style="left:456.5px;top:65.00px;font-size:13.5px;color:#b6b8ba;letter-spacing:-0.017px;">activity_main.xml</span>
<span class="t" style="left:618px;top:65.00px;font-size:13.5px;color:#b6b8ba;letter-spacing:-0.061px;">MainActivity.java</span>
<span class="t" style="left:775px;top:65.00px;font-size:13.5px;color:#b6b8ba;letter-spacing:0.028px;">settings.gradle (My Application)</span>
<span class="t" style="left:1022.5px;top:65.00px;font-size:13.5px;color:#b6b8ba;letter-spacing:-0.017px;">build.gradle (:app)</span>
<span class="t" style="left:1189.5px;top:65.00px;font-size:13.5px;color:#b6b8ba;letter-spacing:-0.069px;">AndroidManifest.xml</span>
<span class="t" style="left:436px;top:96.50px;font-size:16px;color:#a9b7c6;letter-spacing:0.224px;">You can use the Project Structure dialog to view and edit your project configuration</span>
<span class="t" style="left:1380.5px;top:96.50px;font-size:16px;color:#589df6;letter-spacing:-0.188px;">Open (⌘;)</span>
<span class="t" style="left:1478.5px;top:96.50px;font-size:16px;color:#589df6;letter-spacing:0.303px;">Hide notification</span>
<span class="t" style="left:503.5px;top:899.50px;font-size:15px;color:#bbbbbb;letter-spacing:0.004px;">dependencies{}</span>
<span class="t" style="left:48.5px;top:93.80px;font-size:15.8px;color:#bbbbbb;font-weight:bold;letter-spacing:0.235px;">app</span>
<span class="t" style="left:69.7px;top:117.12px;font-size:15.8px;color:#bbbbbb;letter-spacing:0.210px;">manifests</span>
<span class="t" style="left:90.7px;top:140.44px;font-size:15.8px;color:#bbbbbb;letter-spacing:0.257px;">AndroidManifest.xml</span>
<span class="t" style="left:69.7px;top:163.76px;font-size:15.8px;color:#bbbbbb;letter-spacing:-0.171px;">java</span>
<span class="t" style="left:90.7px;top:187.08px;font-size:15.8px;color:#bbbbbb;letter-spacing:0.243px;">com.example.myapplication</span>
<span class="t" style="left:111.6px;top:210.40px;font-size:15.8px;color:#bbbbbb;letter-spacing:0.335px;">MainActivity</span>
<span class="t" style="left:90.7px;top:233.72px;font-size:15.8px;color:#bbbbbb;letter-spacing:0.243px;">com.example.myapplication</span>
<span class="t" style="left:297.1px;top:233.72px;font-size:15.8px;color:#8a8c8e;letter-spacing:0.238px;">(androidTest)</span>
<span class="t" style="left:90.7px;top:257.04px;font-size:15.8px;color:#bbbbbb;letter-spacing:0.243px;">com.example.myapplication</span>
<span class="t" style="left:297.1px;top:257.04px;font-size:15.8px;color:#8a8c8e;letter-spacing:0.336px;">(test)</span>
<span class="t" style="left:69.7px;top:280.36px;font-size:15.8px;color:#bbbbbb;letter-spacing:-0.171px;">java</span>
<span class="t" style="left:103.6px;top:280.36px;font-size:15.8px;color:#8a8c8e;letter-spacing:0.166px;">(generated)</span>
<span class="t" style="left:69.7px;top:303.68px;font-size:15.8px;color:#bbbbbb;letter-spacing:-0.051px;">res</span>
<span class="t" style="left:90.7px;top:327.00px;font-size:15.8px;color:#bbbbbb;letter-spacing:0.149px;">drawable</span>
<span class="t" style="left:90.7px;top:350.32px;font-size:15.8px;color:#bbbbbb;letter-spacing:0.224px;">layout</span>
<span class="t" style="left:90.7px;top:373.64px;font-size:15.8px;color:#bbbbbb;letter-spacing:0.135px;">mipmap</span>
<span class="t" style="left:90.7px;top:396.96px;font-size:15.8px;color:#bbbbbb;letter-spacing:0.005px;">values</span>
<span class="t" style="left:90.7px;top:420.28px;font-size:15.8px;color:#bbbbbb;letter-spacing:0.141px;">xml</span>
<span class="t" style="left:111.6px;top:443.60px;font-size:15.8px;color:#bbbbbb;letter-spacing:0.255px;">backup_rules.xml</span>
<span class="t" style="left:111.6px;top:466.92px;font-size:15.8px;color:#bbbbbb;letter-spacing:0.288px;">data_extraction_rules.xml</span>
<span class="t" style="left:69.7px;top:490.24px;font-size:15.8px;color:#bbbbbb;letter-spacing:-0.051px;">res</span>
<span class="t" style="left:96.89999999999999px;top:490.24px;font-size:15.8px;color:#8a8c8e;letter-spacing:0.166px;">(generated)</span>
<span class="t" style="left:48.5px;top:513.56px;font-size:15.8px;color:#bbbbbb;letter-spacing:0.222px;">Gradle Scripts</span>
<span class="t" style="left:69.7px;top:536.88px;font-size:15.8px;color:#bbbbbb;letter-spacing:0.276px;">build.gradle</span>
<span class="t" style="left:160.0px;top:536.88px;font-size:15.8px;color:#8a8c8e;letter-spacing:0.256px;">(Project: My_Application)</span>
<span class="t" style="left:69.7px;top:560.20px;font-size:15.8px;color:#bbbbbb;letter-spacing:0.276px;">build.gradle</span>
<span class="t" style="left:160.0px;top:560.20px;font-size:15.8px;color:#8a8c8e;letter-spacing:0.218px;">(Module :app)</span>
<span class="t" style="left:69.7px;top:583.52px;font-size:15.8px;color:#bbbbbb;letter-spacing:0.380px;">proguard-rules.pro</span>
<span class="t" style="left:211.60000000000002px;top:583.52px;font-size:15.8px;color:#8a8c8e;letter-spacing:0.186px;">(ProGuard Rules for &quot;:app&quot;)</span>
<span class="t" style="left:69.7px;top:606.84px;font-size:15.8px;color:#bbbbbb;letter-spacing:0.350px;">gradle.properties</span>
<span class="t" style="left:199.5px;top:606.84px;font-size:15.8px;color:#8a8c8e;letter-spacing:0.266px;">(Project Properties)</span>
<span class="t" style="left:69.7px;top:630.16px;font-size:15.8px;color:#bbbbbb;letter-spacing:0.423px;">gradle-wrapper.properties</span>
<span class="t" style="left:265.6px;top:630.16px;font-size:15.8px;color:#8a8c8e;letter-spacing:0.087px;">(Gradle Version)</span>
<span class="t" style="left:69.7px;top:653.48px;font-size:15.8px;color:#bbbbbb;letter-spacing:0.361px;">local.properties</span>
<span class="t" style="left:188.0px;top:653.48px;font-size:15.8px;color:#8a8c8e;letter-spacing:0.048px;">(SDK Location)</span>
<span class="t" style="left:69.7px;top:676.80px;font-size:15.8px;color:#bbbbbb;letter-spacing:0.317px;">settings.gradle</span>
<span class="t" style="left:182.8px;top:676.80px;font-size:15.8px;color:#8a8c8e;letter-spacing:0.258px;">(Project Settings)</span>
<div id="ed2">
<span class="t" style="left:1554.3px;top:128.00px;font-size:15px;color:#bbbbbb;">5</span>
<span class="t m n" style="left:430.3px;top:111.56px;font-size:14.6px;color:#606366;letter-spacing:-0.158px;">11</span>
<span class="t m n" style="left:430.3px;top:137.20px;font-size:14.6px;color:#606366;letter-spacing:-0.158px;">12</span>
<span class="t m n" style="left:430.3px;top:162.84px;font-size:14.6px;color:#606366;letter-spacing:-0.158px;">13</span>
<span class="t m n" style="left:430.3px;top:188.48px;font-size:14.6px;color:#606366;letter-spacing:-0.158px;">14</span>
<span class="t m n" style="left:430.3px;top:214.12px;font-size:14.6px;color:#606366;letter-spacing:-0.158px;">15</span>
<span class="t m n" style="left:430.3px;top:239.76px;font-size:14.6px;color:#606366;letter-spacing:-0.158px;">16</span>
<span class="t m n" style="left:430.3px;top:265.40px;font-size:14.6px;color:#606366;letter-spacing:-0.158px;">17</span>
<span class="t m n" style="left:430.3px;top:291.04px;font-size:14.6px;color:#606366;letter-spacing:-0.158px;">18</span>
<span class="t m n" style="left:430.3px;top:316.68px;font-size:14.6px;color:#606366;letter-spacing:-0.158px;">19</span>
<span class="t m n" style="left:430.3px;top:342.32px;font-size:14.6px;color:#606366;letter-spacing:-0.158px;">20</span>
<span class="t m n" style="left:430.3px;top:367.96px;font-size:14.6px;color:#606366;letter-spacing:-0.158px;">21</span>
<span class="t m n" style="left:430.3px;top:393.60px;font-size:14.6px;color:#606366;letter-spacing:-0.158px;">22</span>
<span class="t m n" style="left:430.3px;top:419.24px;font-size:14.6px;color:#606366;letter-spacing:-0.158px;">23</span>
<span class="t m n" style="left:430.3px;top:444.88px;font-size:14.6px;color:#606366;letter-spacing:-0.158px;">24</span>
<span class="t m n" style="left:430.3px;top:470.52px;font-size:14.6px;color:#606366;letter-spacing:-0.158px;">25</span>
<span class="t m n" style="left:430.3px;top:496.16px;font-size:14.6px;color:#606366;letter-spacing:-0.158px;">26</span>
<span class="t m n" style="left:430.3px;top:521.80px;font-size:14.6px;color:#606366;letter-spacing:-0.158px;">27</span>
<span class="t m n" style="left:430.3px;top:547.44px;font-size:14.6px;color:#606366;letter-spacing:-0.158px;">28</span>
<span class="t m n" style="left:430.3px;top:573.08px;font-size:14.6px;color:#606366;letter-spacing:-0.158px;">29</span>
<span class="t m n" style="left:430.3px;top:598.72px;font-size:14.6px;color:#606366;letter-spacing:-0.158px;">30</span>
<span class="t m n" style="left:430.3px;top:624.36px;font-size:14.6px;color:#606366;letter-spacing:-0.158px;">31</span>
<span class="t m n" style="left:430.3px;top:650.00px;font-size:14.6px;color:#606366;letter-spacing:-0.158px;">32</span>
<span class="t m n" style="left:430.3px;top:675.64px;font-size:14.6px;color:#606366;letter-spacing:-0.158px;">33</span>
<span class="t m n" style="left:430.3px;top:701.28px;font-size:14.6px;color:#606366;letter-spacing:-0.158px;">34</span>
<span class="t m n" style="left:430.3px;top:726.92px;font-size:14.6px;color:#a4a3a3;letter-spacing:-0.158px;">35</span>
<span class="t m n" style="left:430.3px;top:752.56px;font-size:14.6px;color:#606366;letter-spacing:-0.158px;">36</span>
<span class="t m n" style="left:430.3px;top:778.20px;font-size:14.6px;color:#606366;letter-spacing:-0.158px;">37</span>
<span class="t m n" style="left:430.3px;top:803.84px;font-size:14.6px;color:#606366;letter-spacing:-0.158px;">38</span>
<span class="t m n" style="left:430.3px;top:829.48px;font-size:14.6px;color:#606366;letter-spacing:-0.158px;">39</span>
<span class="t m n" style="left:430.3px;top:855.12px;font-size:14.6px;color:#606366;letter-spacing:-0.158px;">40</span>
<span class="t m" style="left:571.64px;top:111.56px;font-size:15.13px;color:#a9b7c6;letter-spacing:0.002px;">minSdk </span>
<span class="t m" style="left:635.2px;top:111.56px;font-size:15.13px;color:#6897bb;letter-spacing:0.002px;">23</span>
<span class="t m" style="left:571.64px;top:137.20px;font-size:15.13px;color:#a9b7c6;letter-spacing:0.003px;">targetSdk </span>
<span class="t m" style="left:662.44px;top:137.20px;font-size:15.13px;color:#6897bb;letter-spacing:0.002px;">33</span>
<span class="t m" style="left:571.64px;top:162.84px;font-size:15.13px;color:#a9b7c6;letter-spacing:0.003px;">versionCode </span>
<span class="t m" style="left:680.6px;top:162.84px;font-size:15.13px;color:#6897bb;letter-spacing:0.002px;">1</span>
<span class="t m" style="left:571.64px;top:188.48px;font-size:15.13px;color:#a9b7c6;letter-spacing:0.003px;">versionName </span>
<span class="t m" style="left:680.6px;top:188.48px;font-size:15.13px;color:#6a8759;letter-spacing:0.002px;">&quot;1.0&quot;</span>
<span class="t m" style="left:571.64px;top:239.76px;font-size:15.13px;color:#a9b7c6;letter-spacing:0.003px;">testInstrumentationRunner </span>
<span class="t m" style="left:807.72px;top:239.76px;font-size:15.13px;color:#6a8759;letter-spacing:0.003px;">&quot;androidx.test.runner.AndroidJUnitRunner&quot;</span>
<span class="t m" style="left:535.32px;top:265.40px;font-size:15.13px;color:#a9b7c6;letter-spacing:0.002px;">}</span>
<span class="t m" style="left:535.32px;top:316.68px;font-size:15.13px;color:#9876aa;letter-spacing:0.003px;">buildTypes</span>
<span class="t m" style="left:626.12px;top:316.68px;font-size:15.13px;color:#a9b7c6;letter-spacing:0.002px;"> {</span>
<span class="t m" style="left:571.64px;top:342.32px;font-size:15.13px;color:#a9b7c6;letter-spacing:0.002px;">release {</span>
<span class="t m" style="left:607.96px;top:367.96px;font-size:15.13px;color:#a9b7c6;letter-spacing:0.003px;">minifyEnabled </span>
<span class="t m" style="left:735.08px;top:367.96px;font-size:15.13px;color:#cc7832;letter-spacing:0.002px;">false</span>
<span class="t m" style="left:607.96px;top:393.60px;font-size:15.13px;color:#a9b7c6;letter-spacing:0.003px;">proguardFiles getDefaultProguardFile(</span>
<span class="t m" style="left:943.9200000000001px;top:393.60px;font-size:15.13px;color:#6a8759;letter-spacing:0.003px;">&#x27;proguard-android-optimize.txt&#x27;</span>
<span class="t m" style="left:1225.4px;top:393.60px;font-size:15.13px;color:#a9b7c6;letter-spacing:0.002px;">), </span>
<span class="t m" style="left:1252.6399999999999px;top:393.60px;font-size:15.13px;color:#6a8759;letter-spacing:0.003px;">&#x27;proguard-rules.pro&#x27;</span>
<span class="t m" style="left:571.64px;top:419.24px;font-size:15.13px;color:#a9b7c6;letter-spacing:0.002px;">}</span>
<span class="t m" style="left:535.32px;top:444.88px;font-size:15.13px;color:#a9b7c6;letter-spacing:0.002px;">}</span>
<span class="t m" style="left:535.32px;top:470.52px;font-size:15.13px;color:#a9b7c6;letter-spacing:0.003px;">compileOptions {</span>
<span class="t m" style="left:571.64px;top:496.16px;font-size:15.13px;color:#a9b7c6;letter-spacing:0.003px;">sourceCompatibility JavaVersion.</span>
<span class="t m" style="left:862.2px;top:496.16px;font-size:15.13px;color:#9876aa;font-style:italic;letter-spacing:0.003px;">VERSION_1_8</span>
<span class="t m" style="left:571.64px;top:521.80px;font-size:15.13px;color:#a9b7c6;letter-spacing:0.003px;">targetCompatibility JavaVersion.</span>
<span class="t m" style="left:862.2px;top:521.80px;font-size:15.13px;color:#9876aa;font-style:italic;letter-spacing:0.003px;">VERSION_1_8</span>
<span class="t m" style="left:535.32px;top:547.44px;font-size:15.13px;color:#a9b7c6;letter-spacing:0.002px;">}</span>
<span class="t m" style="left:499.0px;top:573.08px;font-size:15.13px;color:#a9b7c6;letter-spacing:0.002px;">}</span>
<span class="t m" style="left:499.0px;top:624.36px;font-size:15.13px;color:#9876aa;letter-spacing:0.003px;">dependencies</span>
<span class="t m" style="left:607.96px;top:624.36px;font-size:15.13px;color:#a9b7c6;letter-spacing:0.002px;"> {</span>
<span class="t m" style="left:535.32px;top:675.64px;font-size:15.13px;color:#a9b7c6;letter-spacing:0.003px;">implementation </span>
<span class="t m" style="left:671.52px;top:675.64px;font-size:15.13px;color:#6a8759;letter-spacing:0.003px;">&#x27;androidx.appcompat:appcompat:1.4.1&#x27;</span>
<span class="t m" style="left:535.32px;top:701.28px;font-size:15.13px;color:#a9b7c6;letter-spacing:0.003px;">implementation </span>
<span class="t m" style="left:671.52px;top:701.28px;font-size:15.13px;color:#6a8759;letter-spacing:0.003px;">&#x27;com.google.android.material:material:1.5.0&#x27;</span>
<span class="t m" style="left:535.32px;top:726.92px;font-size:15.13px;color:#a9b7c6;letter-spacing:0.003px;">implementation </span>
<span class="t m" style="left:671.52px;top:726.92px;font-size:15.13px;color:#6a8759;letter-spacing:0.003px;">&#x27;androidx.constraintlayout:constraintlayout:2.1.3&#x27;</span>
<span class="t m" style="left:535.32px;top:752.56px;font-size:15.13px;color:#a9b7c6;letter-spacing:0.003px;">implementation </span>
<span class="t m" style="left:671.52px;top:752.56px;font-size:15.13px;color:#6a8759;letter-spacing:0.003px;">&quot;io.esper.devicesdk:app:2.1.2851.18+&quot;</span>
<span class="t m" style="left:535.32px;top:778.20px;font-size:15.13px;color:#a9b7c6;letter-spacing:0.004px;">testImplementation </span>
<span class="t m" style="left:707.84px;top:778.20px;font-size:15.13px;color:#6a8759;letter-spacing:0.003px;">&#x27;junit:junit:4.13.2&#x27;</span>
<span class="t m" style="left:535.32px;top:803.84px;font-size:15.13px;color:#a9b7c6;letter-spacing:0.003px;">androidTestImplementation </span>
<span class="t m" style="left:771.4px;top:803.84px;font-size:15.13px;color:#6a8759;letter-spacing:0.003px;">&#x27;androidx.test.ext:junit:1.1.5&#x27;</span>
<span class="t m" style="left:535.32px;top:829.48px;font-size:15.13px;color:#a9b7c6;letter-spacing:0.003px;">androidTestImplementation </span>
<span class="t m" style="left:771.4px;top:829.48px;font-size:15.13px;color:#6a8759;letter-spacing:0.003px;">&#x27;androidx.test.espresso:espresso-core:3.5.1&#x27;</span>
<span class="t m" style="left:499.0px;top:855.12px;font-size:15.13px;color:#a9b7c6;letter-spacing:0.002px;">}</span>
</div>
</div>
</body></html>
